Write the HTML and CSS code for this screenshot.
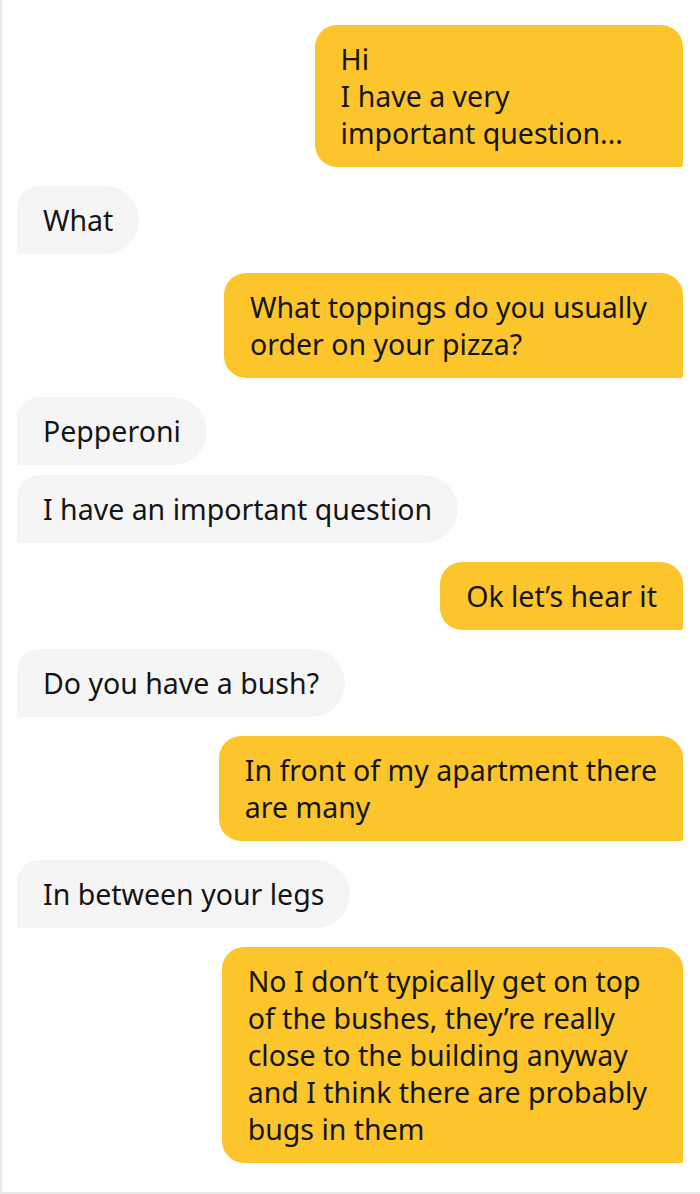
FILE: index.html
```html
<!DOCTYPE html>
<html lang="en">
<head>
<meta charset="utf-8">
<link rel="stylesheet" href="styles.css">
</head>
<body>
<div class="chat">
  <div class="msg me wide">Hi<br>I have a very<br>important question...</div>
  <div class="msg them g">What</div>
  <div class="msg me g roomy">What toppings do you usually<br>order on your pizza?</div>
  <div class="msg them g">Pepperoni</div>
  <div class="msg them s">I have an important question</div>
  <div class="msg me g">Ok let’s hear it</div>
  <div class="msg them g">Do you have a bush?</div>
  <div class="msg me g">In front of my apartment there<br>are many</div>
  <div class="msg them g">In between your legs</div>
  <div class="msg me g roomy">No I don’t typically get on top<br>of the bushes, they’re really<br>close to the building anyway<br>and I think there are probably<br>bugs in them</div>
</div>
</body>
</html>
```

FILE: styles.css
```css
html, body {
  margin: 0;
  padding: 0;
  background: #ffffff;
}
body {
  width: 700px;
  height: 1194px;
  box-sizing: border-box;
  border-left: 2px solid #e8e8e8;
  border-bottom: 2px solid #e8e8e8;
  overflow: hidden;
  font-family: "Noto Sans", "Open Sans", sans-serif;
  color: #151515;
}
.chat {
  display: flex;
  flex-direction: column;
  padding: 25px 17px 0 15px;
}
.msg {
  font-size: 28.5px;
  line-height: 37px;
  padding: 15.5px 26px;
  white-space: nowrap;
}
.g { margin-top: 19px; }
.s { margin-top: 10px; }
.me {
  align-self: flex-end;
  background: #fbc52b;
  border-radius: 22px 22px 2px 22px;
}
.wide { padding-right: 60px; }
.roomy { padding-right: 36px; }
.them {
  align-self: flex-start;
  background: #f5f5f5;
  border-radius: 22px 34px 34px 2px;
}
```
